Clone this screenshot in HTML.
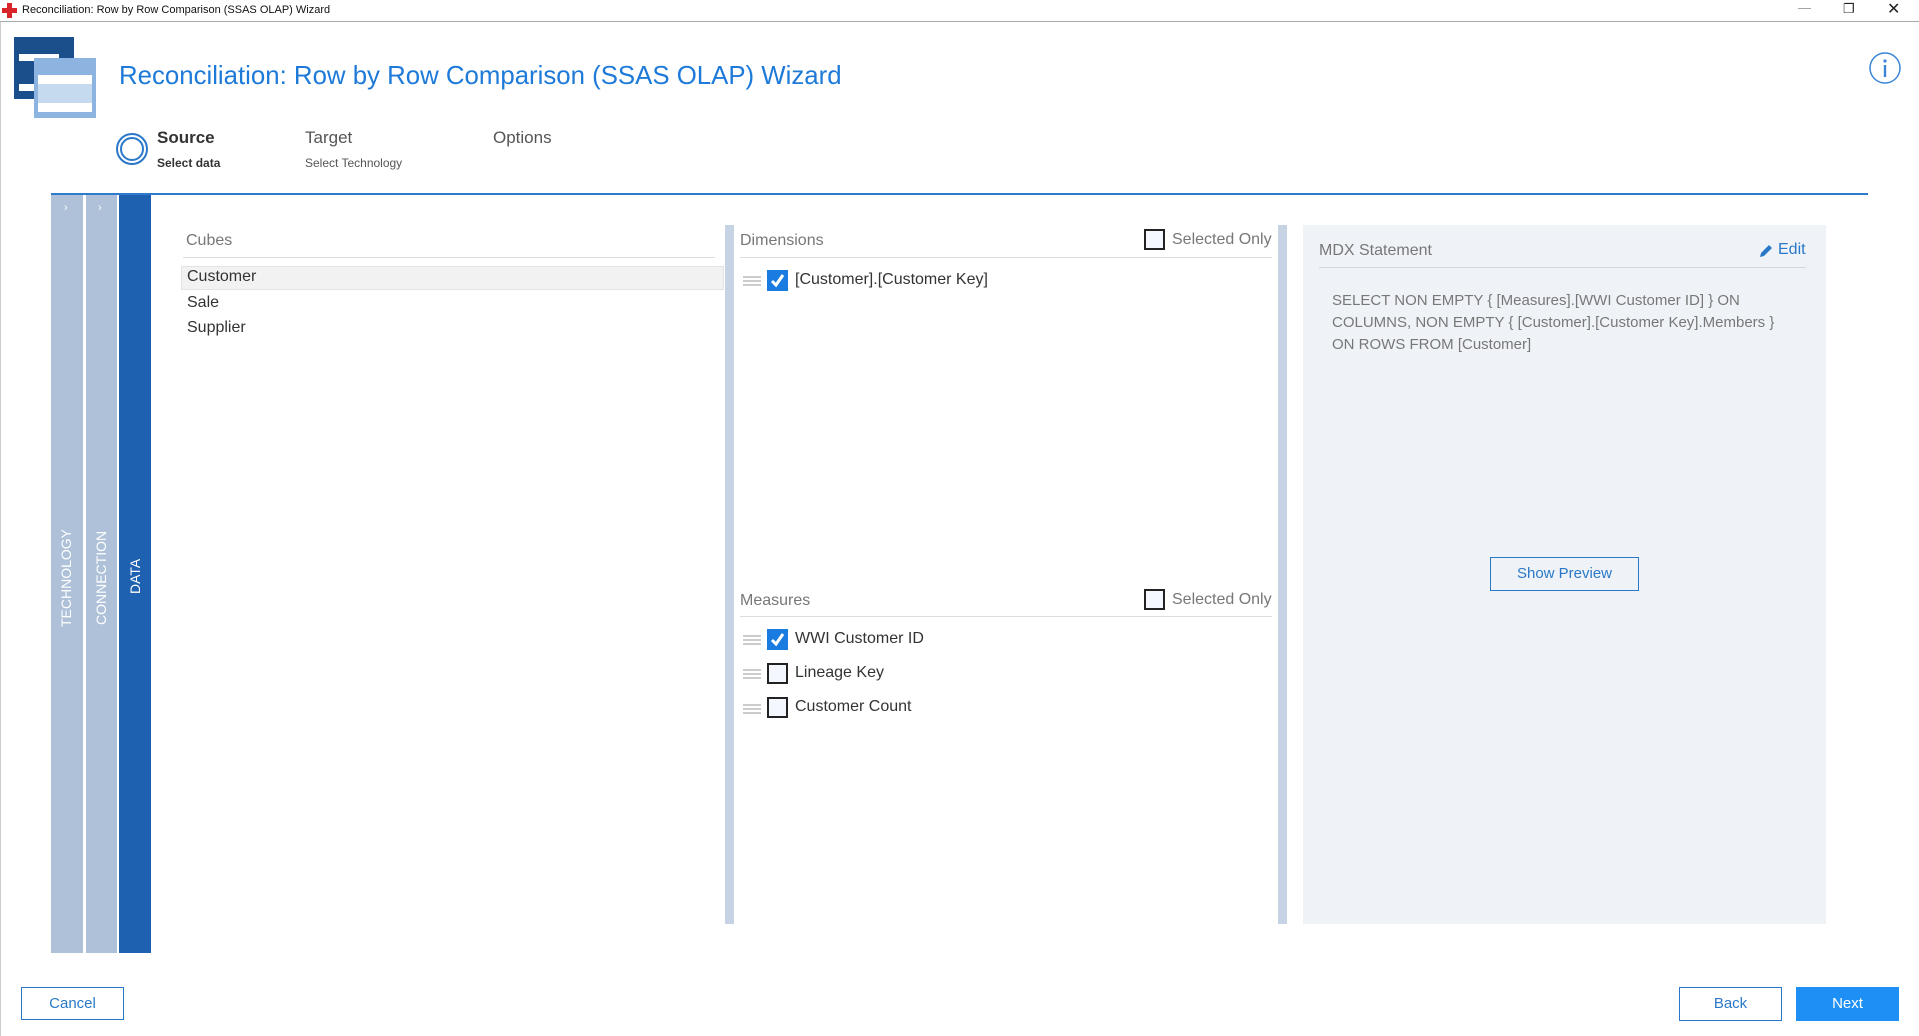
<!DOCTYPE html>
<html><head><meta charset="utf-8"><style>
*{margin:0;padding:0;box-sizing:border-box}
body{width:1919px;height:1036px;background:#fff;font-family:"Liberation Sans",sans-serif;position:relative;overflow:hidden;color:#444}
.a{position:absolute;white-space:nowrap}
.cb{position:absolute;width:21px;height:21px;border:2px solid #222;background:#f4f8fe}
.cbc{position:absolute;width:21px;height:21px;background:#1a7be0}
.hd{position:absolute;width:18px;height:10px;border-top:2px solid #ccc;border-bottom:2px solid #ccc}
.hd:after{content:"";position:absolute;left:0;right:0;top:2px;border-top:2px solid #ccc}
.btn{position:absolute;border:1px solid #2a78c8;color:#2a78c8;font-size:15px;text-align:center}
.vt{position:absolute;transform:rotate(-90deg);transform-origin:left top;color:#fff;font-size:14px;white-space:nowrap}
</style></head><body>
<div class="a" style="left:0;top:0;width:1919px;height:22px;border-bottom:1px solid #aaa"></div>
<svg class="a" style="left:2px;top:3px" width="16" height="16"><path d="M5 0h5v5h5v5h-5v5H5v-5H0V5h5z" fill="#d7252a"/></svg>
<div class="a" style="left:22px;top:4px;font-size:11px;color:#111">Reconciliation: Row by Row Comparison (SSAS OLAP) Wizard</div>
<div class="a" style="left:1798px;top:0;font-size:13px;color:#999">—</div>
<div class="a" style="left:1843px;top:1px;font-size:13px;color:#222">❐</div>
<div class="a" style="left:1887px;top:-1px;font-size:16px;color:#222">✕</div>
<div class="a" style="left:0;top:22px;width:1px;height:1014px;background:#ccc"></div>
<svg class="a" style="left:14px;top:37px" width="82" height="81"><rect x="0" y="0" width="60" height="62" fill="#1b4f8c"/><rect x="5" y="17" width="40" height="7" fill="#fff"/><rect x="5" y="47" width="40" height="7" fill="#fff"/><rect x="20" y="21" width="62" height="60" fill="#8db4e0"/><rect x="24" y="38" width="54" height="9" fill="#fff"/><rect x="24" y="47" width="54" height="19" fill="#c5d9ef"/><rect x="24" y="66" width="54" height="9" fill="#fff"/></svg>
<div class="a" style="left:119px;top:62px;font-size:25.8px;color:#1e7ad8">Reconciliation: Row by Row Comparison (SSAS OLAP) Wizard</div>
<svg class="a" style="left:1868px;top:51px" width="34" height="34"><circle cx="17" cy="17" r="15" fill="none" stroke="#3a86d6" stroke-width="1.5"/><circle cx="17" cy="10" r="1.6" fill="#3a86d6"/><rect x="15.8" y="14" width="2.4" height="12" fill="#3a86d6"/></svg>
<svg class="a" style="left:115px;top:132px" width="34" height="34"><circle cx="17" cy="17" r="15" fill="none" stroke="#2a78c8" stroke-width="2"/><circle cx="17" cy="17" r="11" fill="none" stroke="#2a78c8" stroke-width="2"/></svg>
<div class="a" style="left:157px;top:128px;font-size:17px;font-weight:bold;color:#333">Source</div>
<div class="a" style="left:157px;top:156px;font-size:12px;font-weight:bold;color:#333">Select data</div>
<div class="a" style="left:305px;top:128px;font-size:17px;color:#555">Target</div>
<div class="a" style="left:305px;top:156px;font-size:12px;color:#555">Select Technology</div>
<div class="a" style="left:493px;top:128px;font-size:17px;color:#555">Options</div>
<div class="a" style="left:51px;top:193px;width:1817px;height:2px;background:#2f7acb"></div>
<div class="a" style="left:51px;top:195px;width:32px;height:758px;background:#aec1d9"></div>
<div class="a" style="left:86px;top:195px;width:31px;height:758px;background:#aec1d9"></div>
<div class="a" style="left:119px;top:195px;width:32px;height:758px;background:#1e61b0"></div>
<div class="a" style="left:64px;top:202px;color:#fff;font-size:11px">›</div>
<div class="a" style="left:98px;top:202px;color:#fff;font-size:11px">›</div>
<div class="vt" style="left:58px;top:627px">TECHNOLOGY</div>
<div class="vt" style="left:93px;top:625px">CONNECTION</div>
<div class="vt" style="left:127px;top:594px">DATA</div>
<div class="a" style="left:186px;top:232px;font-size:16px;color:#777">Cubes</div>
<div class="a" style="left:183px;top:257px;width:532px;height:1px;background:#ddd"></div>
<div class="a" style="left:181px;top:266px;width:543px;height:24px;background:#f2f2f2;border:1px solid #e4e4e4"></div>
<div class="a" style="left:187px;top:268px;font-size:16px;color:#333">Customer</div>
<div class="a" style="left:187px;top:294px;font-size:16px;color:#333">Sale</div>
<div class="a" style="left:187px;top:319px;font-size:16px;color:#333">Supplier</div>
<div class="a" style="left:725px;top:225px;width:9px;height:699px;background:#c5d3e5"></div>
<div class="a" style="left:1278px;top:225px;width:9px;height:699px;background:#c5d3e5"></div>
<div class="a" style="left:740px;top:232px;font-size:16px;color:#777">Dimensions</div>
<div class="cb" style="left:1144px;top:229px"></div>
<div class="a" style="left:1172px;top:231px;font-size:16px;color:#777">Selected Only</div>
<div class="a" style="left:740px;top:257px;width:532px;height:1px;background:#ddd"></div>
<div class="hd" style="left:743px;top:276px"></div>
<div class="cbc" style="left:767px;top:270px"></div>
<svg class="a" style="left:767px;top:270px" width="21" height="21"><path d="M5 11l4 4 7-10" fill="none" stroke="#fff" stroke-width="3"/></svg>
<div class="a" style="left:795px;top:271px;font-size:16px;color:#333">[Customer].[Customer Key]</div>
<div class="a" style="left:740px;top:592px;font-size:16px;color:#777">Measures</div>
<div class="cb" style="left:1144px;top:589px"></div>
<div class="a" style="left:1172px;top:591px;font-size:16px;color:#777">Selected Only</div>
<div class="a" style="left:740px;top:616px;width:532px;height:1px;background:#ddd"></div>
<div class="hd" style="left:743px;top:635px"></div>
<div class="cbc" style="left:767px;top:629px"></div>
<svg class="a" style="left:767px;top:629px" width="21" height="21"><path d="M5 11l4 4 7-10" fill="none" stroke="#fff" stroke-width="3"/></svg>
<div class="a" style="left:795px;top:630px;font-size:16px;color:#333">WWI Customer ID</div>
<div class="hd" style="left:743px;top:669px"></div>
<div class="cb" style="left:767px;top:663px"></div>
<div class="a" style="left:795px;top:664px;font-size:16px;color:#333">Lineage Key</div>
<div class="hd" style="left:743px;top:704px"></div>
<div class="cb" style="left:767px;top:697px"></div>
<div class="a" style="left:795px;top:698px;font-size:16px;color:#333">Customer Count</div>
<div class="a" style="left:1303px;top:225px;width:523px;height:699px;background:#eff3f8"></div>
<div class="a" style="left:1319px;top:242px;font-size:16px;color:#777">MDX Statement</div>
<svg class="a" style="left:1758px;top:243px" width="16" height="16"><path d="M2 14l1-4 8-8 3 3-8 8z" fill="#2a78c8"/></svg>
<div class="a" style="left:1778px;top:241px;font-size:16px;color:#2a78c8">Edit</div>
<div class="a" style="left:1319px;top:267px;width:487px;height:1px;background:#d4d8dd"></div>
<div class="a" style="left:1332px;top:290px;font-size:15px;line-height:22px;color:#777">SELECT NON EMPTY { [Measures].[WWI Customer ID] } ON<br>COLUMNS, NON EMPTY { [Customer].[Customer Key].Members }<br>ON ROWS FROM [Customer]</div>
<div class="btn" style="left:1490px;top:557px;width:149px;height:34px;line-height:32px">Show Preview</div>
<div class="btn" style="left:21px;top:987px;width:103px;height:33px;line-height:31px">Cancel</div>
<div class="btn" style="left:1679px;top:987px;width:103px;height:34px;line-height:32px">Back</div>
<div class="btn" style="left:1796px;top:987px;width:103px;height:34px;line-height:32px;background:#1e90f5;border-color:#1e90f5;color:#fff">Next</div>
</body></html>
